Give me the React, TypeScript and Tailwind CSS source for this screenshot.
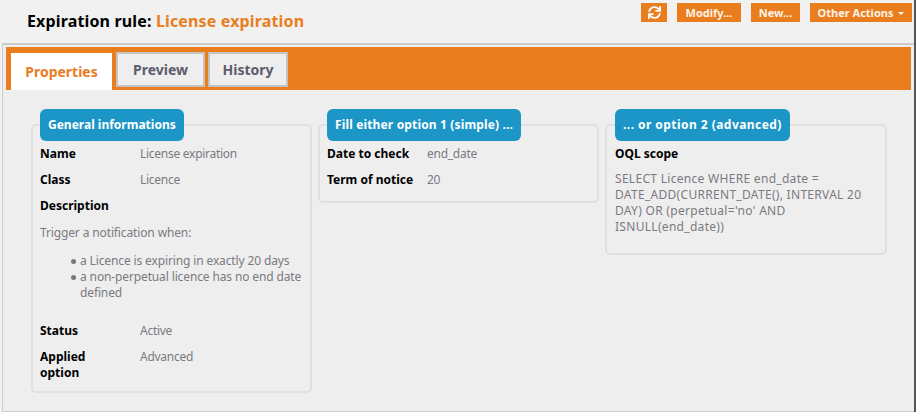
import React from 'react';
import { FaSync } from 'react-icons/fa';

const Row: React.FC<{ label: string; labelWidth: string; value?: string }> = ({ label, labelWidth, value }) => (
    <div className="flex pb-[10px]">
        <div className={`${labelWidth} shrink-0 font-bold tracking-normal text-black`}>{label}</div>
        {value && <div>{value}</div>}
    </div>
);

const Card: React.FC<{ title: string; className: string; titleClass: string; bodyClass: string; children: React.ReactNode }> = ({
    title,
    className,
    titleClass,
    bodyClass,
    children,
}) => (
    <div className={`shrink-0 ${className}`}>
        <div className={`relative z-10 inline-block h-[32px] rounded-[6px] bg-[#1c95c7] px-2 text-[12px] leading-[32px] font-bold text-white ${titleClass}`}>
            {title}
        </div>
        <div className={`-mt-[17px] rounded-[5px] border-2 border-[#e0e0e0] pt-[20px] ${bodyClass}`}>{children}</div>
    </div>
);

const Bullet: React.FC<{ children: React.ReactNode }> = ({ children }) => (
    <li className="flex">
        <span className="mt-[6px] mr-[4px] h-[5px] w-[5px] shrink-0 rounded-full bg-[#77777c]" />
        <span>{children}</span>
    </li>
);

export default function App() {
    return (
        <div
            className="h-[412px] w-[916px] overflow-hidden border-r-2 border-[#555555] bg-[#f1f1f1] text-[12px] leading-[16px] tracking-[-0.27px] text-[#7a7a80]"
            style={{ fontFamily: '"Noto Sans", sans-serif' }}
        >
            <header className="flex h-[43px] justify-between pr-[2px] pl-[27px]">
                <h1 className="pt-[11px] text-[16px] leading-[20px] font-bold tracking-[0.15px] text-black">
                    Expiration rule: <span className="text-[#ea7d1e]">License expiration</span>
                </h1>
                <div className="flex items-start gap-[10px] pt-[3px] text-[11px] leading-[19px] font-bold tracking-normal text-[#fdf3e8]">
                    <button className="flex h-[19px] w-[26px] items-center justify-center bg-[#ea7d1e]">
                        <FaSync className="h-[13px] w-[13px] text-white" />
                    </button>
                    <button className="h-[19px] w-[64px] bg-[#ea7d1e] text-center">Modify...</button>
                    <button className="h-[19px] w-[49px] bg-[#ea7d1e] text-center">New...</button>
                    <button className="flex h-[19px] w-[102px] items-center justify-center gap-[5px] bg-[#ea7d1e]">
                        Other Actions
                        <span className="mt-[2px] h-0 w-0 border-x-[3px] border-t-[3px] border-x-transparent border-t-white" />
                    </button>
                </div>
            </header>

            <main className="ml-[2px] h-[369px] w-[912px] border-t-2 border-b border-l border-[#cccccc] bg-[#eeeeee] pt-[2px]">
                <nav className="ml-[3px] flex h-[43px] w-[905px] items-end gap-[3px] bg-[#ea7d1e] pl-[5px] text-[14px] leading-[20px] font-bold tracking-normal text-[#5c5c6a]">
                    <div className="mr-[1px] flex h-[37px] w-[101px] items-center justify-center bg-white text-[#ea7d1e]">Properties</div>
                    <div className="mb-[3px] flex h-[35px] w-[89px] items-center justify-center border-2 border-[#c4c4c4] bg-[#eeeeee]">Preview</div>
                    <div className="mb-[3px] flex h-[35px] w-[80px] items-center justify-center border-2 border-[#c4c4c4] bg-[#eeeeee]">History</div>
                </nav>

                <div className="flex items-start gap-[6px] pt-[19px] pl-[28px]">
                    <Card title="General informations" className="w-[281px]" titleClass="ml-[9px] tracking-normal" bodyClass="px-[7px]">
                        <Row label="Name" labelWidth="w-[100px] pr-[16px]" value="License expiration" />
                        <Row label="Class" labelWidth="w-[100px] pr-[16px]" value="Licence" />
                        <div className="pb-[11px] font-bold tracking-normal text-black">Description</div>
                        <p className="tracking-[-0.13px]">Trigger a notification when:</p>
                        <ul className="mt-[12px] mb-[22px] pl-[31px] tracking-[-0.13px]">
                            <Bullet>a Licence is expiring in exactly 20 days</Bullet>
                            <Bullet>a non-perpetual licence has no end date defined</Bullet>
                        </ul>
                        <Row label="Status" labelWidth="w-[100px] pr-[16px]" value="Active" />
                        <Row label="Applied option" labelWidth="w-[100px] pr-[16px]" value="Advanced" />
                    </Card>
                    <Card title="Fill either option 1 (simple) ..." className="w-[281px]" titleClass="ml-[9px] tracking-[0.15px]" bodyClass="px-[7px] pb-[3px]">
                        <Row label="Date to check" labelWidth="w-[100px]" value="end_date" />
                        <Row label="Term of notice" labelWidth="w-[100px]" value="20" />
                    </Card>
                    <Card title="... or option 2 (advanced)" className="w-[282px]" titleClass="ml-[10px] tracking-[0.45px]" bodyClass="px-[8px]">
                        <div className="pb-[9px] font-bold tracking-normal text-black">OQL scope</div>
                        <p className="pb-[18px] tracking-[0.3px]">
                            SELECT Licence WHERE end_date = DATE_ADD(CURRENT_DATE(), INTERVAL 20 DAY) OR (perpetual='no' AND ISNULL(end_date))
                        </p>
                    </Card>
                </div>
            </main>
        </div>
    );
}
